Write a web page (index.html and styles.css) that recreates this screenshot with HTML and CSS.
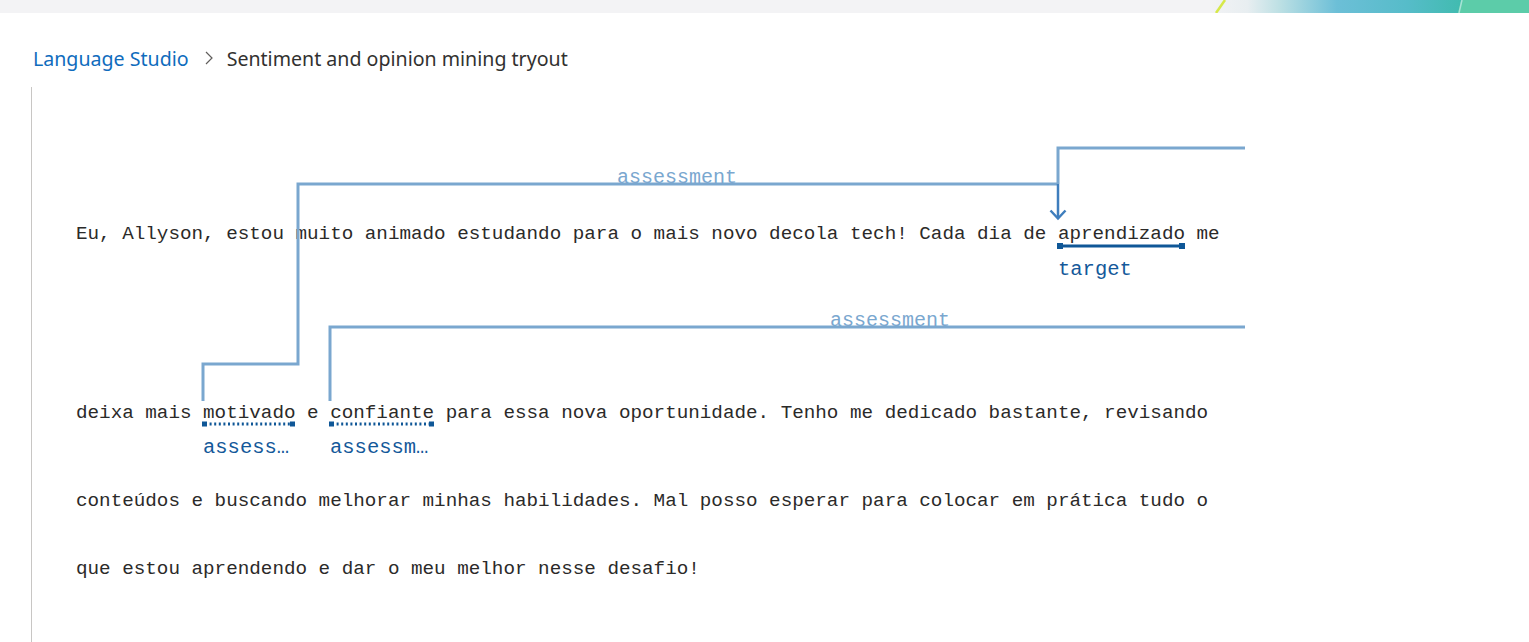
FILE: index.html
```html
<!DOCTYPE html>
<html lang="pt">
<head>
<meta charset="utf-8">
<title>Sentiment and opinion mining tryout</title>
<link rel="stylesheet" href="styles.css">
</head>
<body>
<div class="page">
  <header class="topbar">
    <svg class="topbar-art" width="320" height="13" viewBox="0 0 320 13" aria-hidden="true">
      <defs>
        <linearGradient id="g1" x1="0" y1="0" x2="1" y2="0">
          <stop offset="0" stop-color="#f3f3f5"/>
          <stop offset="0.12" stop-color="#e8eef1"/>
          <stop offset="0.22" stop-color="#bde0e4"/>
          <stop offset="0.4" stop-color="#6cbfd7"/>
          <stop offset="0.62" stop-color="#56bcc9"/>
          <stop offset="0.82" stop-color="#3dbbab"/>
          <stop offset="1" stop-color="#3dbbab"/>
        </linearGradient>
      </defs>
      <rect x="0" y="0" width="320" height="13" fill="url(#g1)"/>
      <polygon points="252,0 320,0 320,13 249,13" fill="#5ccca9"/>
      <line x1="253" y1="0" x2="250" y2="13" stroke="#a7e3d6" stroke-width="1.5"/>
      <line x1="16" y1="0" x2="7" y2="13" stroke="#d6e84a" stroke-width="2.5"/>
    </svg>
  </header>

  <nav class="breadcrumb">
    <a class="crumb-link" href="#">Language Studio</a>
    <span class="crumb-sep">
      <svg width="12" height="16" viewBox="0 0 12 16" aria-hidden="true"><path d="M3 2 L9 8 L3 14" fill="none" stroke="#605e5c" stroke-width="1.2"/></svg>
    </span>
    <span class="crumb-current">Sentiment and opinion mining tryout</span>
  </nav>

  <main class="content">
    <div class="line line-1">Eu, Allyson, estou muito animado estudando para o mais novo decola tech! Cada dia de aprendizado me</div>
    <div class="line line-2">deixa mais motivado e confiante para essa nova oportunidade. Tenho me dedicado bastante, revisando</div>
    <div class="line line-3">conteúdos e buscando melhorar minhas habilidades. Mal posso esperar para colocar em prática tudo o</div>
    <div class="line line-4">que estou aprendendo e dar o meu melhor nesse desafio!</div>
  </main>

  <svg class="annotations" width="1529" height="642" viewBox="0 0 1529 642" aria-hidden="false">
    <g fill="none" stroke="#7aa7cf" stroke-width="3" stroke-linejoin="miter" stroke-linecap="butt">
      <path d="M203 401 V364 H298 V184 H1058"/>
      <path d="M1245 148 H1058 V184"/>
      <path d="M330 401 V327 H1245"/>
    </g>
    <g fill="none" stroke="#3f7ebd" stroke-width="2.5">
      <path d="M1058 184 V218"/>
      <path d="M1050.5 210.5 L1058 218.5 L1065.5 210.5"/>
    </g>
    <text class="rel-label" x="617" y="183">assessment</text>
    <text class="rel-label" x="830" y="326">assessment</text>

    <g fill="#0f5797">
      <rect x="1058" y="244.5" width="126" height="3"/>
      <rect x="1057" y="243" width="6" height="6"/>
      <rect x="1179" y="243" width="6" height="6"/>
    </g>
    <g stroke="#0f5797" stroke-width="3" stroke-dasharray="2 2.6">
      <line x1="205" y1="424" x2="293" y2="424"/>
      <line x1="332" y1="424" x2="432" y2="424"/>
    </g>
    <g fill="#0f5797">
      <rect x="202" y="421.5" width="5" height="5"/>
      <rect x="290" y="421.5" width="5" height="5"/>
      <rect x="329" y="421.5" width="5" height="5"/>
      <rect x="429" y="421.5" width="5" height="5"/>
    </g>
    <text class="ent-label" x="1058" y="275">target</text>
    <text class="ent-label" x="203" y="453">assess…</text>
    <text class="ent-label" x="330" y="453">assessm…</text>
  </svg>
</div>
</body>
</html>
```

FILE: styles.css
```css
html, body {
  margin: 0;
  padding: 0;
  background: #ffffff;
}

.page {
  position: relative;
  width: 1529px;
  height: 642px;
  overflow: hidden;
  font-family: "Noto Sans", "Open Sans", "Liberation Sans", sans-serif;
}

.topbar {
  height: 13px;
  background: #f3f3f5;
  display: flex;
  justify-content: flex-end;
}

.topbar-art {
  display: block;
}

.breadcrumb {
  display: flex;
  align-items: center;
  height: 30px;
  margin-top: 30px;
  padding-left: 33px;
  font-size: 19.6px;
}

.crumb-link {
  color: #0f6cbd;
  text-decoration: none;
}

.crumb-sep {
  display: flex;
  align-items: center;
  margin: 0 12px 0 14px;
}

.crumb-current {
  color: #323130;
}

.content {
  margin-top: 14px;
  margin-left: 31px;
  border-left: 1px solid #c8c6c4;
  height: 560px;
  padding-left: 44px;
  padding-top: 132px;
  box-sizing: border-box;
}

.line {
  font-family: "Liberation Mono", "DejaVu Sans Mono", monospace;
  font-size: 19.25px;
  line-height: 30px;
  height: 30px;
  color: #2b2a29;
  white-space: pre;
}

.line-2 { margin-top: 149px; }
.line-3 { margin-top: 58px; }
.line-4 { margin-top: 38px; }

.annotations {
  position: absolute;
  left: 0;
  top: 0;
  pointer-events: none;
}

.rel-label {
  font-family: "Liberation Mono", "DejaVu Sans Mono", monospace;
  font-size: 20px;
  fill: #7aa7cf;
}

.ent-label {
  font-family: "Liberation Mono", "DejaVu Sans Mono", monospace;
  font-size: 20.5px;
  fill: #14599a;
}
```
